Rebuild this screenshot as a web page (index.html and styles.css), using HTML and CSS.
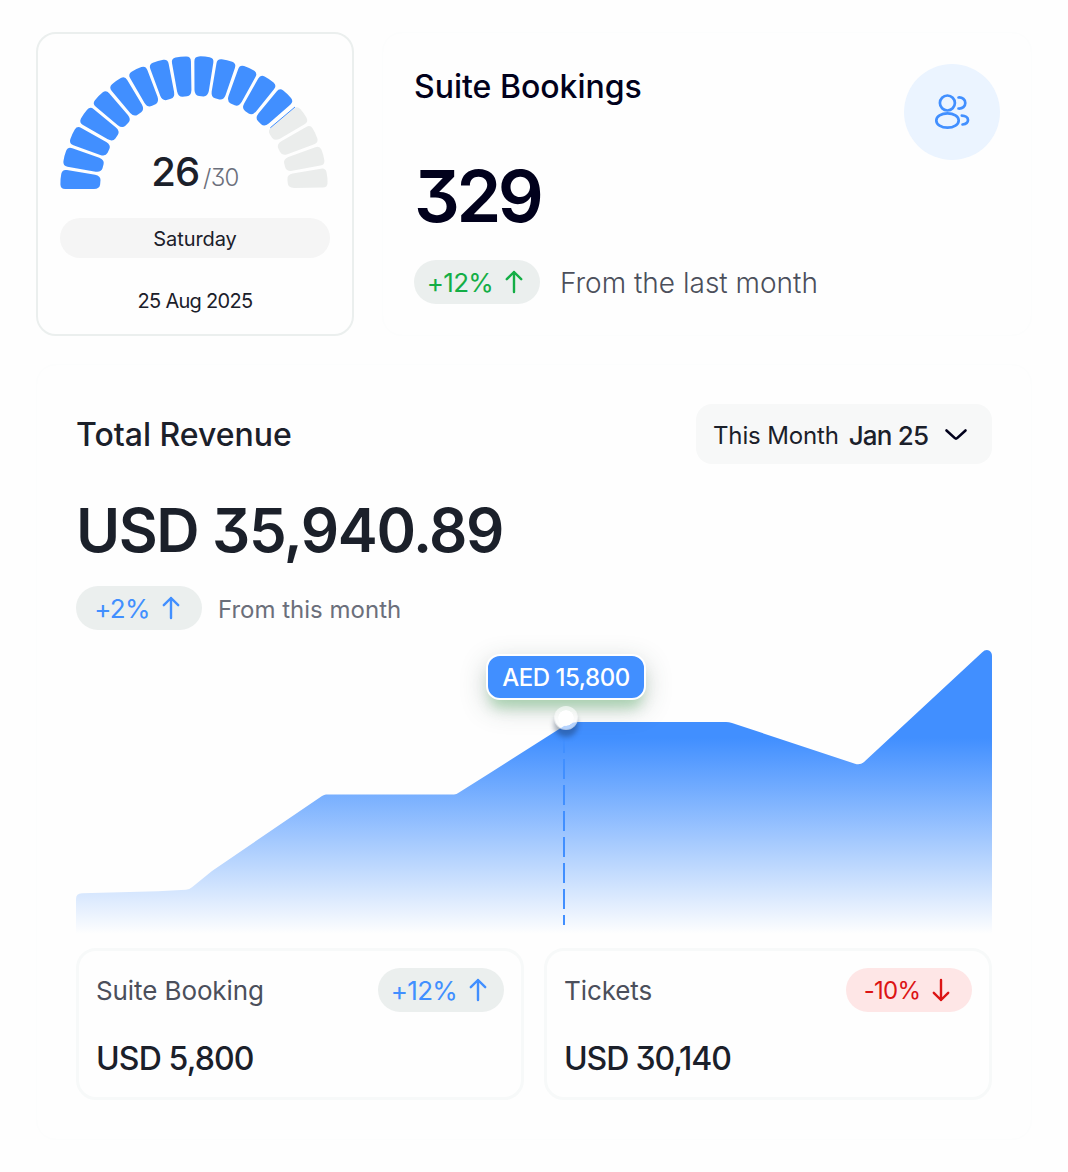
FILE: index.html
```html
<!DOCTYPE html>
<html lang="en">
<head>
<meta charset="UTF-8">
<meta name="viewport" content="width=device-width, initial-scale=1.0">
<title>Bookings Dashboard</title>
<link rel="stylesheet" href="styles.css">
</head>

<body>
    <div id="wrapper">
        <div class="top-row">

            <!--DATE CARD-->
            <div class="card date-card">
                <div class="gauge">
                    <svg width="270" height="144" viewBox="0 0 270 144">
                        <defs>
                            <path id="seg" d="M-9.5 -128.3Q-10 -133 -5.4 -133.6Q0 -134.2 5.4 -133.6Q10 -133 9.5 -128.3L7.2 -99.8Q6.5 -94.200 2.200 -94H-2.200Q-6.500 -94.200 -7.200 -99.800Z" />
                        </defs>
                        <g transform="translate(134 134)">
                            <g class="seg-on">
                                <use href="#seg" transform="rotate(-85.3)" />
                                <use href="#seg" transform="rotate(-75.3)" />
                                <use href="#seg" transform="rotate(-65.4)" />
                                <use href="#seg" transform="rotate(-55.4)" />
                                <use href="#seg" transform="rotate(-45.5)" />
                                <use href="#seg" transform="rotate(-35.5)" />
                                <use href="#seg" transform="rotate(-25.5)" />
                                <use href="#seg" transform="rotate(-15.6)" />
                                <use href="#seg" transform="rotate(-5.6)" />
                                <use href="#seg" transform="rotate(4.4)" />
                                <use href="#seg" transform="rotate(14.3)" />
                                <use href="#seg" transform="rotate(24.3)" />
                                <use href="#seg" transform="rotate(34.2)" />
                                <use href="#seg" transform="rotate(44.2)" />
                            </g>
                            <g class="seg-off">
                                <use href="#seg" transform="rotate(55)" />
                                <use href="#seg" transform="rotate(64.9)" />
                                <use href="#seg" transform="rotate(74.8)" />
                                <use href="#seg" transform="rotate(84.7)" />
                            </g>
                            <path class="seg-line" d="M76.3 -62.2L101 -83" />
                        </g>
                    </svg>
                    <div class="gauge-value"><span class="days">26</span><span class="total">/30</span></div>
                </div>
                <div class="weekday">Saturday</div>
                <div class="date">25 Aug 2025</div>
            </div>

            <!--BOOKINGS CARD-->
            <div class="card bookings-card">
                <div>
                    <h2 class="title bookings-title">Suite Bookings</h2>
                    <div class="bookings-count">329</div>
                    <div class="trend">
                        <span class="badge green">+12%
                            <svg width="18" height="24" viewBox="0 0 18 24"><path d="M9 22V2M1.8 9.2L9 2L16.2 9.2" /></svg>
                        </span>
                        <span class="trend-large">From the last month</span>
                    </div>
                </div>
                <div class="icon-circle">
                    <svg width="96" height="96" viewBox="0 0 96 96">
                        <circle cx="43.4" cy="39" r="7.5" />
                        <ellipse cx="43.5" cy="56.5" rx="11.2" ry="7.2" />
                        <path d="M54.5 33.5C58.5 33.2 61.3 35.6 61.3 39C61.3 42.4 58.5 44.8 54.5 44.5" />
                        <path d="M57.8 51.6C61.3 51.7 64 53.5 64 55.9C64 58.3 61.7 60 58.5 60.5" />
                    </svg>
                </div>
            </div>
        </div>

        <!--REVENUE CARD-->
        <div class="card revenue-card">
            <div class="revenue-header">
                <h2 class="title revenue-title">Total Revenue</h2>
                <div class="month-select">
                    <span class="month-label">This Month</span>
                    <span class="month-value">Jan 25</span>
                    <svg width="24" height="14" viewBox="0 0 24 14"><path d="M2.5 2.5L10.6 9.9Q12 11.2 13.4 9.9L21.5 2.5" /></svg>
                </div>
            </div>
            <div class="revenue-amount">USD 35,940.89</div>
            <div class="trend">
                <span class="badge blue">+2%
                    <svg width="18" height="24" viewBox="0 0 18 24"><path d="M9 22V2M1.8 9.2L9 2L16.2 9.2" /></svg>
                </span>
                <span class="trend-small">From this month</span>
            </div>

            <div class="chart">
                <svg width="916" height="300" viewBox="0 0 916 300">
                    <defs>
                        <linearGradient id="area" gradientUnits="userSpaceOnUse" x1="0" y1="102" x2="0" y2="298">
                            <stop offset="0" stop-color="#418fff" />
                            <stop offset="1" stop-color="#418fff" stop-opacity="0" />
                        </linearGradient>
                    </defs>
                    <path fill="url(#area)" d="M0 263Q0 257.4 6 257.2L82 255.3L110 253.7Q113.5 253.4 116 251.2L136 235L246 160Q248.3 158.5 250 158.5H378Q380.500 158.500 383 156.500L414 137L484 92.500Q494 86 502 86H650Q653 86 656 87L779 127.800Q784 129.500 788 126L906 16.500Q909.500 13 913 14.500Q916 16 916 20V300H0Z" />
                    <path class="guide" d="M488 97V289" />
                </svg>
                <div class="tooltip">AED 15,800</div>
                <div class="marker"></div>
            </div>

            <div class="summary">
                <div class="summary-card">
                    <div class="summary-head">
                        <span class="summary-label">Suite Booking</span>
                        <span class="badge blue">+12%
                            <svg width="18" height="24" viewBox="0 0 18 24"><path d="M9 22V2M1.8 9.2L9 2L16.2 9.2" /></svg>
                        </span>
                    </div>
                    <div class="summary-amount">USD 5,800</div>
                </div>
                <div class="summary-card">
                    <div class="summary-head">
                        <span class="summary-label">Tickets</span>
                        <span class="badge red">-10%
                            <svg width="18" height="24" viewBox="0 0 18 24"><path d="M9 2V22M1.8 14.8L9 22L16.2 14.8" /></svg>
                        </span>
                    </div>
                    <div class="summary-amount tight">USD 30,140</div>
                </div>
            </div>
        </div>
    </div>
</body>
</html>
```

FILE: styles.css
```css
* 
{
    box-sizing: border-box;
}
body 
{
    margin: 0;
    background: #fefefe;
    color: #1b202a;
    font-family: Inter, "Liberation Sans", sans-serif;
    font-feature-settings: "cv09";
}
svg 
{
    display: block;
    fill: none;
    stroke-linecap: round;
    stroke-linejoin: round;
}
#wrapper 
{
    width: 996px;
    margin: 32px 36px;
}
.top-row 
{
    display: grid;
    grid-template-columns: 318px 650px;
    grid-template-rows: 304px;
    gap: 28px;
    margin-bottom: 28px;
}
.card 
{
    border: 1px solid #fcfdfd;
    border-radius: 20px;
    white-space: nowrap;
}

/* date card */
.date-card 
{
    height: 304px;
    border: 2px solid #ebefee;
    padding: 22px 22px 0;
    text-align: center;
}
.gauge 
{
    position: relative;
    height: 144px;
}
.seg-on 
{
    fill: #418fff;
}
.seg-off 
{
    fill: #ebedec;
}
.seg-line 
{
    stroke: #418fff;
    stroke-width: 1;
    stroke-linecap: butt;
}
.gauge-value 
{
    position: absolute;
    left: 0;
    right: 0;
    bottom: -2px;
    display: flex;
    justify-content: center;
    align-items: baseline;
    gap: 4px;
    line-height: 48px;
}
.days 
{
    font-size: 40px;
    font-weight: 500;
    letter-spacing: -1px;
}
.total 
{
    font-size: 24px;
    font-weight: 350;
    color: #6b6f7b;
    letter-spacing: -0.7px;
}
.weekday 
{
    height: 40px;
    margin-top: 18px;
    border-radius: 20px;
    background: #f5f5f5;
    font-size: 20px;
    line-height: 42px;
    letter-spacing: -0.1px;
}
.date 
{
    margin-top: 29px;
    font-size: 20px;
    line-height: 28px;
    letter-spacing: -0.7px;
}

/* bookings card */
.bookings-card 
{
    display: flex;
    justify-content: space-between;
    padding: 31px;
}
.title 
{
    margin: 0;
    font-size: 32px;
    font-weight: 500;
    line-height: 46px;
}
.bookings-title 
{
    color: #01011c;
}
.bookings-count 
{
    margin-top: 42px;
    color: #01011c;
    font-size: 72px;
    font-weight: 600;
    line-height: 88px;
    letter-spacing: -3.5px;
}
.bookings-card .trend 
{
    margin-top: 20px;
}
.trend 
{
    display: flex;
    align-items: center;
}
.badge 
{
    display: flex;
    align-items: center;
    justify-content: center;
    gap: 12px;
    width: 126px;
    height: 44px;
    padding-right: 4px;
    border-radius: 22px;
    background: #ebefee;
    font-size: 26px;
    letter-spacing: -0.7px;
}
.badge svg 
{
    stroke: currentColor;
    stroke-width: 2.4;
}
.green 
{
    color: #14ae46;
}
.blue 
{
    color: #418fff;
}
.red 
{
    background: #fee6e6;
    color: #dc1414;
    font-size: 24px;
}
.trend-large 
{
    margin-left: 20px;
    padding-top: 2px;
    color: #4b4f5b;
    font-size: 28px;
    font-weight: 300;
}
.trend-small 
{
    margin-left: 16px;
    padding-top: 2px;
    color: #6b6f7b;
    font-size: 24px;
}
.icon-circle 
{
    width: 96px;
    height: 96px;
    border-radius: 50%;
    background: #ebf4ff;
}
.icon-circle svg 
{
    stroke: #418fff;
    stroke-width: 2.7;
}

/* revenue card */
.revenue-card 
{
    height: 776px;
    padding: 39px;
}
.revenue-header 
{
    display: flex;
    justify-content: space-between;
    align-items: center;
}
.revenue-title 
{
    padding-top: 2px;
}
.month-select 
{
    display: flex;
    align-items: center;
    width: 296px;
    height: 60px;
    padding: 2px 0 0 17px;
    border-radius: 16px;
    background: #f7f8f8;
}
.month-label 
{
    font-size: 24px;
    letter-spacing: -0.15px;
}
.month-value 
{
    margin-left: 10px;
    font-size: 26px;
    font-weight: 500;
    letter-spacing: -0.8px;
}
.month-select svg 
{
    margin-left: 16px;
    stroke: #01011c;
    stroke-width: 2.6;
}
.revenue-amount 
{
    margin-top: 28px;
    margin-bottom: 18px;
    font-size: 60px;
    font-weight: 600;
    line-height: 76px;
    letter-spacing: -1.4px;
}

.chart 
{
    position: relative;
    height: 300px;
    margin: 6px 0 12px;
}
.guide 
{
    stroke: #418fff;
    stroke-width: 2;
    stroke-dasharray: 20 6;
    stroke-linecap: butt;
}
.tooltip 
{
    position: absolute;
    left: 410px;
    top: 18px;
    width: 160px;
    height: 46px;
    border: 2px solid #fff;
    border-radius: 14px;
    background: #418fff;
    box-shadow: 0 12px 12px -4px rgba(90, 190, 105, 0.34), 0 8px 26px rgba(50, 75, 65, 0.26);
    color: #fff;
    font-size: 24px;
    font-weight: 500;
    line-height: 43px;
    letter-spacing: -0.45px;
    text-align: center;
}
.marker 
{
    position: absolute;
    left: 478px;
    top: 70px;
    width: 24px;
    height: 24px;
    border: 4px solid rgba(255, 255, 255, 0.62);
    border-radius: 50%;
    background: #fff;
    background-clip: padding-box;
    box-shadow: 0 7px 5px rgba(20, 40, 70, 0.36);
}

.summary 
{
    display: grid;
    grid-template-columns: 1fr 1fr;
    gap: 20px;
}
.summary-card 
{
    height: 152px;
    padding: 17px;
    border: 3px solid #f7f9f9;
    border-radius: 20px;
}
.summary-head 
{
    display: flex;
    justify-content: space-between;
    align-items: center;
}
.summary-label 
{
    color: #4b4f5b;
    font-size: 26px;
    letter-spacing: -0.1px;
}
.summary-amount 
{
    margin-top: 24px;
    font-size: 32px;
    font-weight: 500;
    line-height: 46px;
    letter-spacing: -0.85px;
}
.tight 
{
    letter-spacing: -1.1px;
}
```
